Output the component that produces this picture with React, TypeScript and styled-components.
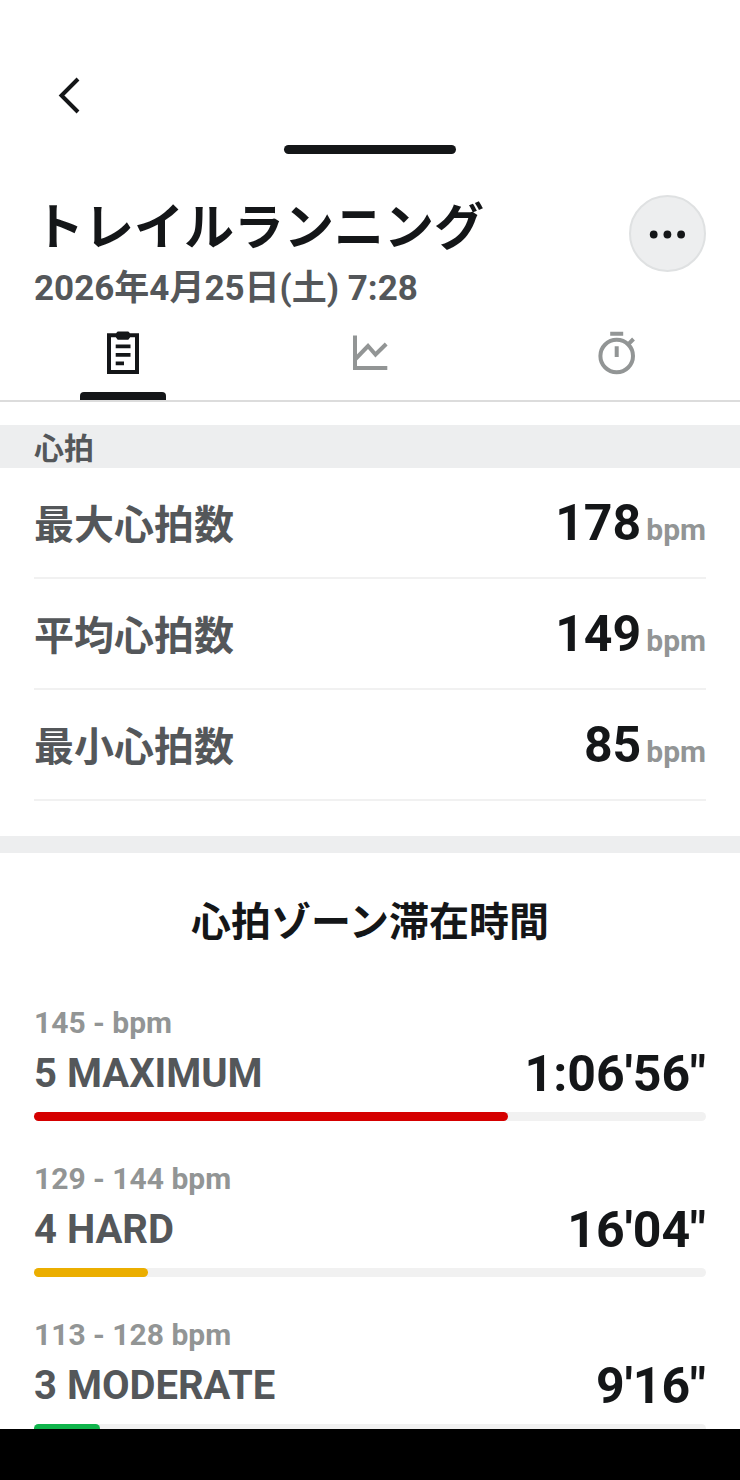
import React, { useState } from "react";
import styled, { createGlobalStyle } from "styled-components";

const color = {
  ink: "#141618",
  label: "#54575a",
  muted: "#929595",
  band: "#edeeef",
  line: "#f1f1f1",
  track: "#f1f1f1",
};

const GlobalStyle = createGlobalStyle`
  *, *::before, *::after { box-sizing: border-box; }
  body {
    margin: 0;
    background: #fff;
    color: ${color.ink};
    font-family: Roboto, "Noto Sans CJK JP", sans-serif;
    font-weight: 700;
  }
  h1, h2, p, dl, dt, dd, ul { margin: 0; padding: 0; font: inherit; }
  ul { list-style: none; }
  button { margin: 0; padding: 0; border: 0; background: none; color: inherit; font: inherit; cursor: pointer; }
  svg { display: block; }
`;

const Screen = styled.div`
  display: flex;
  flex-direction: column;
  height: 100vh;
`;

const Sheet = styled.div`
  flex: 1;
  min-height: 0;
  display: flex;
  flex-direction: column;
`;

const TopBar = styled.header`
  display: flex;
  padding: 60px 34px 13px;
`;

const BackButton = styled.button`
  display: grid;
  place-items: center;
  width: 72px;
  height: 72px;
`;

const Handle = styled.div`
  align-self: center;
  flex-shrink: 0;
  width: 172px;
  height: 9px;
  border-radius: 5px;
  background: ${color.ink};
`;

const Heading = styled.div`
  display: flex;
  align-items: flex-start;
  justify-content: space-between;
  padding: 41px 34px 0;
`;

const Title = styled.h1`
  font-size: 50px;
  line-height: 66px;
`;

const DateText = styled.p`
  padding-top: 4px;
  color: ${color.label};
  font-size: 35px;
  line-height: 48px;
`;

const MoreButton = styled.button`
  display: grid;
  place-items: center;
  width: 77px;
  height: 77px;
  border: 2px solid #dfe1e2;
  border-radius: 50%;
  background: ${color.band};
`;

const Tabs = styled.div`
  display: grid;
  grid-template-columns: repeat(3, 1fr);
  flex-shrink: 0;
  padding-top: 16px;
  border-bottom: 2px solid #dcdcdc;
`;

const Tab = styled.button<{ $active: boolean }>`
  display: flex;
  flex-direction: column;
  align-items: center;
  justify-content: space-between;
  height: 71px;
  color: ${(p) => (p.$active ? color.ink : color.muted)};

  &::after {
    content: "";
    width: 86px;
    height: 8px;
    border-radius: 4px 4px 0 0;
    background: ${(p) => (p.$active ? color.ink : "transparent")};
  }
`;

const Content = styled.main`
  flex: 1;
  min-height: 0;
  overflow-y: auto;
  scrollbar-width: none;
  padding-top: 23px;
`;

const BandTitle = styled.h2`
  padding: 5px 34px 0;
  background: ${color.band};
  color: ${color.label};
  font-size: 30px;
  line-height: 38px;
`;

const Stats = styled.dl`
  padding: 0 34px 35px;
`;

const StatRow = styled.div`
  display: flex;
  align-items: center;
  justify-content: space-between;
  height: 111px;
  padding-top: 7px;
  border-bottom: 2px solid ${color.line};
`;

const StatLabel = styled.dt`
  color: ${color.label};
  font-size: 40px;
  line-height: 56px;
`;

const StatValue = styled.dd`
  display: flex;
  align-items: baseline;
  gap: 5px;
  font-size: 50px;
  line-height: 56px;
`;

const Unit = styled.span`
  color: ${color.muted};
  font-size: 30px;
`;

const Divider = styled.div`
  height: 17px;
  background: ${color.band};
`;

const ZoneTitle = styled.h2`
  padding: 41px 34px 53px;
  font-size: 40px;
  line-height: 58px;
  text-align: center;
`;

const ZoneList = styled.ul`
  display: grid;
  gap: 40px;
  padding: 0 34px 40px;
`;

const ZoneRange = styled.p`
  color: ${color.muted};
  font-size: 30px;
  line-height: 36px;
`;

const ZoneRow = styled.div`
  display: flex;
  align-items: center;
  justify-content: space-between;
  padding: 5px 0 10px;
  line-height: 56px;
`;

const ZoneName = styled.span`
  color: ${color.label};
  font-size: 40px;
`;

const ZoneTime = styled.span`
  font-size: 50px;
`;

const Track = styled.div`
  height: 9px;
  border-radius: 5px;
  background: ${color.track};
`;

const Fill = styled.div<{ $color: string }>`
  height: 100%;
  border-radius: 5px;
  background: ${(p) => p.$color};
`;

const SystemBar = styled.footer`
  flex-shrink: 0;
  height: 51px;
  background: #000;
`;

const BackIcon = () => (
  <svg width="48" height="48" viewBox="0 0 48 48" fill="none" stroke="currentColor" strokeWidth="4" aria-hidden="true">
    <path d="M32 7 15.500 23.500 32 40" />
  </svg>
);

const MoreIcon = () => (
  <svg width="48" height="48" viewBox="0 0 48 48" fill="currentColor" aria-hidden="true">
    <circle cx="9.700" cy="24.500" r="3.900" />
    <circle cx="23.400" cy="24.500" r="3.900" />
    <circle cx="37.100" cy="24.500" r="3.900" />
  </svg>
);

const ClipboardIcon = () => (
  <svg width="48" height="48" viewBox="0 0 48 48" fill="currentColor" aria-hidden="true">
    <path fillRule="evenodd" d="M8 4.300h9.200V4l1.500-1.600h10.600L30.800 4v.3H40V45H8ZM12 8.300V41H36V8.300H31.200L29.300 10.800H18.700L16.800 8.300Z" />
    <path d="M16.700 15.500h14.800v3.700H16.700zM16.700 24h14.800v3.700H16.700zM16.700 32.500h8.300v3.800H16.700z" />
  </svg>
);

const ChartIcon = () => (
  <svg width="48" height="48" viewBox="0 0 48 48" fill="none" stroke="currentColor" strokeWidth="4" aria-hidden="true">
    <path d="M9 6.500V39H41.300M9 30.500 22 17l7.500 8.500L40.200 15" />
  </svg>
);

const StopwatchIcon = () => (
  <svg width="48" height="48" viewBox="0 0 48 48" fill="none" stroke="currentColor" strokeWidth="4" aria-hidden="true">
    <circle cx="23.700" cy="27" r="16.300" />
    <path d="M17.200 4.700h13M23.700 17.300V28M34.700 15.800l5.800-5.800" />
  </svg>
);

const tabs = [
  { label: "サマリー", Icon: ClipboardIcon },
  { label: "グラフ", Icon: ChartIcon },
  { label: "ラップ", Icon: StopwatchIcon },
];

const stats = [
  { label: "最大心拍数", value: 178 },
  { label: "平均心拍数", value: 149 },
  { label: "最小心拍数", value: 85 },
];

const zones = [
  { range: "145 - bpm", name: "5 MAXIMUM", time: "1:06'56\"", share: 70.5, color: "#d50000" },
  { range: "129 - 144 bpm", name: "4 HARD", time: "16'04\"", share: 16.9, color: "#ebae00" },
  { range: "113 - 128 bpm", name: "3 MODERATE", time: "9'16\"", share: 9.8, color: "#0fb44b" },
];

export default function App() {
  const [active, setActive] = useState(0);

  return (
    <>
      <GlobalStyle />
      <Screen>
        <Sheet>
          <TopBar>
            <BackButton type="button" aria-label="戻る">
              <BackIcon />
            </BackButton>
          </TopBar>
          <Handle />
          <Heading>
            <div>
              <Title>トレイルランニング</Title>
              <DateText>2026年4月25日(土) 7:28</DateText>
            </div>
            <MoreButton type="button" aria-label="その他">
              <MoreIcon />
            </MoreButton>
          </Heading>
          <Tabs role="tablist">
            {tabs.map(({ label, Icon }, i) => (
              <Tab
                key={label}
                type="button"
                role="tab"
                aria-label={label}
                aria-selected={i === active}
                $active={i === active}
                onClick={() => setActive(i)}
              >
                <Icon />
              </Tab>
            ))}
          </Tabs>
          <Content>
            <BandTitle>心拍</BandTitle>
            <Stats>
              {stats.map((s) => (
                <StatRow key={s.label}>
                  <StatLabel>{s.label}</StatLabel>
                  <StatValue>
                    {s.value}
                    <Unit>bpm</Unit>
                  </StatValue>
                </StatRow>
              ))}
            </Stats>
            <Divider />
            <ZoneTitle>心拍ゾーン滞在時間</ZoneTitle>
            <ZoneList>
              {zones.map((z) => (
                <li key={z.name}>
                  <ZoneRange>{z.range}</ZoneRange>
                  <ZoneRow>
                    <ZoneName>{z.name}</ZoneName>
                    <ZoneTime>{z.time}</ZoneTime>
                  </ZoneRow>
                  <Track role="progressbar" aria-label={z.name} aria-valuenow={z.share}>
                    <Fill $color={z.color} style={{ width: `${z.share}%` }} />
                  </Track>
                </li>
              ))}
            </ZoneList>
          </Content>
        </Sheet>
        <SystemBar />
      </Screen>
    </>
  );
}
